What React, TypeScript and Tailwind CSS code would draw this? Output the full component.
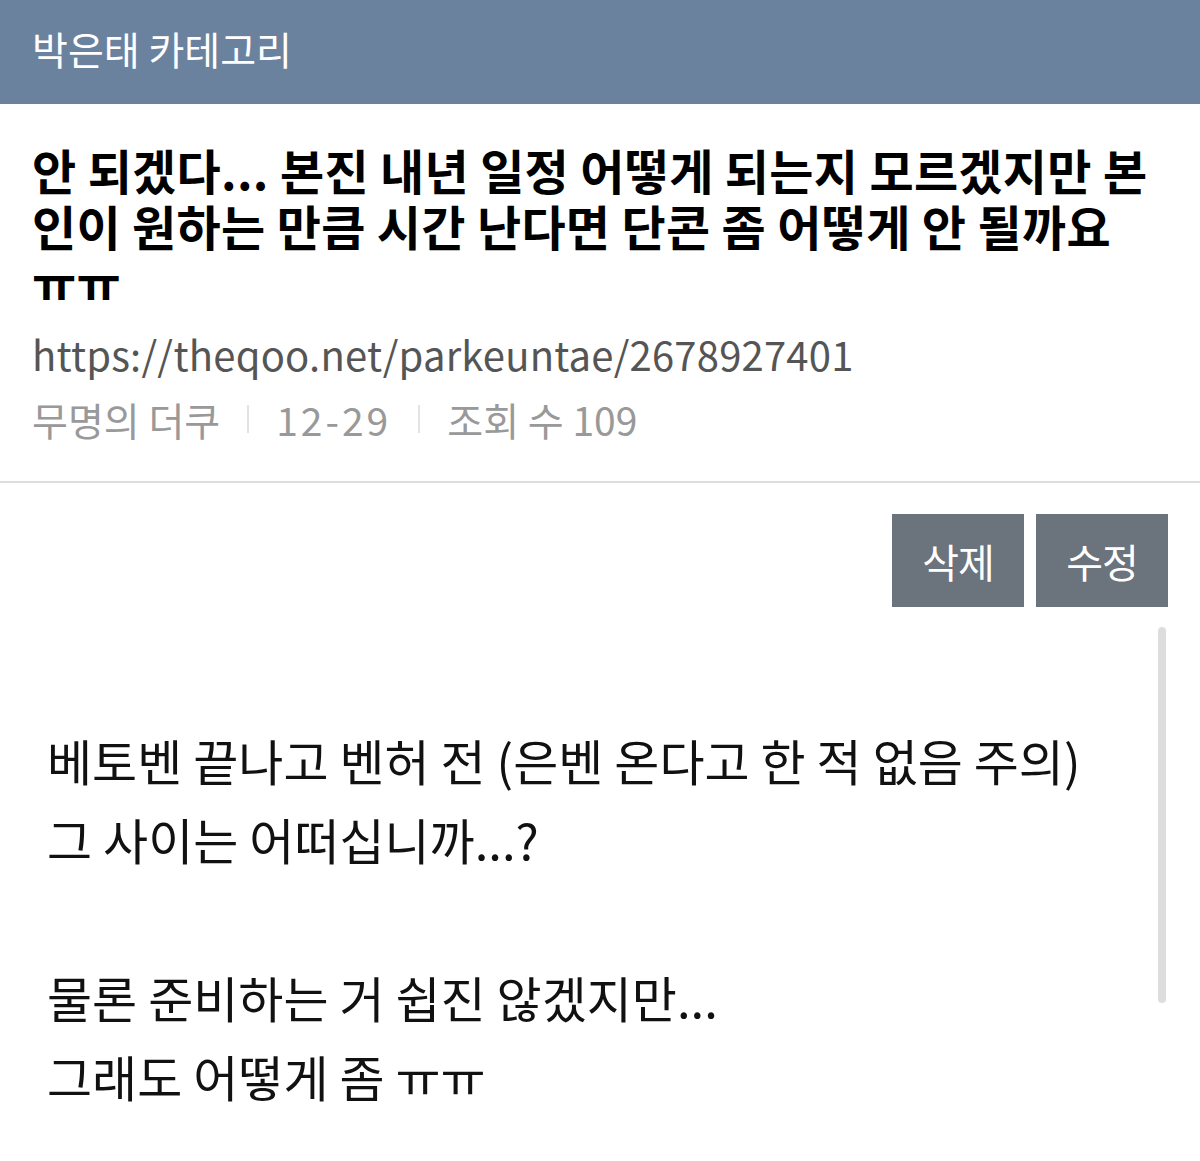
export default function App() {
  const font = { fontFamily: '"Noto Sans CJK KR", "Noto Sans", sans-serif' };
  return (
    <div className="min-h-screen bg-white" style={font}>
      <header className="h-[104px] bg-[#6b829f] flex items-center px-[32px]">
        <h2 className="text-[39px] text-white leading-none pb-[8px]">박은태 카테고리</h2>
      </header>

      <section className="px-[32px] pt-[37px] pb-[34px] border-b-2 border-[#dddddd]">
        <h1 className="text-[48px] font-bold text-black leading-[56px] break-all tracking-[0.3px]">
          안 되겠다... 본진 내년 일정 어떻게 되는지 모르겠지만 본인이 원하는 만큼 시간 난다면 단콘 좀 어떻게 안 될까요{' '}
          <span className="whitespace-nowrap">ㅠㅠ</span>
        </h1>
        <p className="mt-[17px] text-[40px] text-[#555] leading-[56px] tracking-[0.2px]">
          https://theqoo.net/parkeuntae/2678927401
        </p>
        <div className="mt-[9px] flex items-center text-[39px] text-[#999] leading-[56px]">
          <span>무명의 더쿠</span>
          <span className="mx-[27px] w-[2px] h-[28px] bg-[#e3e3e3]" />
          <span className="tracking-[3px]">12-29</span>
          <span className="mx-[27px] w-[2px] h-[28px] bg-[#e3e3e3]" />
          <span>조회 수 109</span>
        </div>
      </section>

      <div className="flex justify-end gap-[12px] pt-[31px] pr-[32px]">
        <button className="w-[132px] h-[93px] bg-[#6b737d] text-white text-[40px] tracking-[-1px]">삭제</button>
        <button className="w-[132px] h-[93px] bg-[#6b737d] text-white text-[40px] tracking-[-1px]">수정</button>
      </div>

      <div className="flex pt-[20px]">
        <div className="flex-1 pl-[47px] pt-[93px] text-[49px] text-[#111] leading-[79px]">
          <p>베토벤 끝나고 벤허 전 (은벤 온다고 한 적 없음 주의)</p>
          <p>그 사이는 어떠십니까...?</p>
          <p>&nbsp;</p>
          <p>물론 준비하는 거 쉽진 않겠지만...</p>
          <p>그래도 어떻게 좀 ㅠㅠ</p>
        </div>
        <div className="w-[8px] h-[376px] bg-[#dddddd] rounded-full mr-[34px]" />
      </div>
    </div>
  );
}
